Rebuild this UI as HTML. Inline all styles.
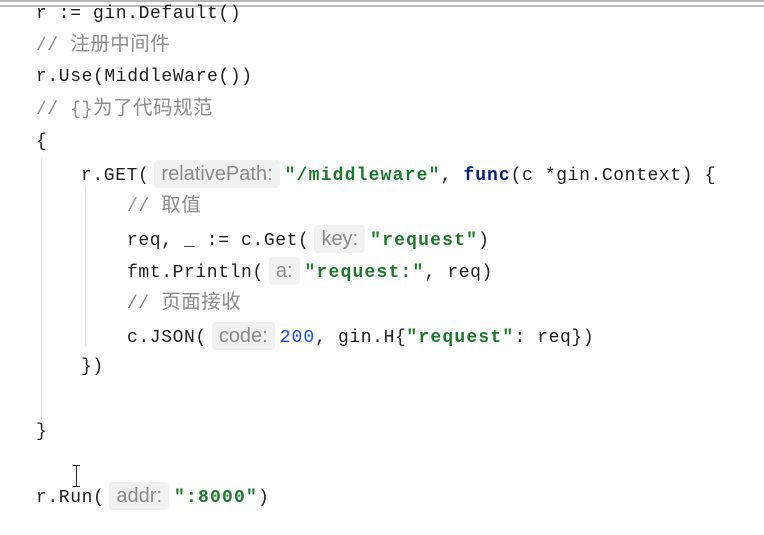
<!DOCTYPE html>
<html><head><meta charset="utf-8"><style>
html,body{margin:0;padding:0;background:#fff;width:764px;height:535px;overflow:hidden;position:relative}
.l{position:absolute;white-space:pre;font-family:"Liberation Mono","Noto Sans CJK SC",monospace;font-size:18px;color:#1e1e1e;line-height:28px;letter-spacing:0.6px}
.c{color:#8c8c8c}
.z{font-family:"Noto Sans CJK SC",sans-serif;font-size:19.5px;letter-spacing:0.5px}
.s{color:#1b7a2a;font-weight:bold;letter-spacing:1.2px}
.k{color:#0a1d80;font-weight:bold;letter-spacing:1px}
.n{color:#1750eb;letter-spacing:1px}
.h{display:inline-block;font-family:"Liberation Sans","Noto Sans CJK SC",sans-serif;font-size:20px;color:#8a8a8a;background:#f1f1f1;border-radius:4px;padding:0 7px;margin:0 5px 0 5px;line-height:28px;letter-spacing:0}
.g{position:absolute;width:1px;background:#e4e4e4}
</style></head><body>
<div style="position:absolute;left:0;top:0;width:764px;height:2px;background:#b5b5b5"></div>
<div style="position:absolute;left:0;top:5px;width:764px;height:2px;background:#bdbdbd"></div>
<div class="g" style="left:41px;top:158px;height:262px"></div>
<div class="g" style="left:85px;top:186px;height:160px"></div>

<div class="l" style="left:36px;top:0px">r := gin.Default()</div>
<div class="l c" style="left:36px;top:28px">// <span class="z">注册中间件</span></div>
<div class="l" style="left:36px;top:63px">r.Use(MiddleWare())</div>
<div class="l c" style="left:36px;top:92px">// {}<span class="z">为了代码规范</span></div>
<div class="l" style="left:36px;top:128px">{</div>
<div class="l" style="left:81px;top:160px">r.GET(<span class="h">relativePath:</span><span class="s">"/middleware"</span>, <span class="k">func</span>(c *gin.Context) {</div>
<div class="l c" style="left:127px;top:189px">// <span class="z">取值</span></div>
<div class="l" style="left:127px;top:225px">req, _ := c.Get(<span class="h">key:</span><span class="s">"request"</span>)</div>
<div class="l" style="left:127px;top:257px">fmt.Println(<span class="h">a:</span><span class="s">"request:"</span>, req)</div>
<div class="l c" style="left:127px;top:286px">// <span class="z">页面接收</span></div>
<div class="l" style="left:127px;top:322px">c.JSON(<span class="h">code:</span><span class="n">200</span>, gin.H{<span class="s">"request"</span>: req})</div>
<div class="l" style="left:81px;top:353px">})</div>
<div class="l" style="left:36px;top:418px">}</div>
<div class="l" style="left:36px;top:482px">r.Run(<span class="h">addr:</span><span class="s">":8000"</span>)</div>
<div style="position:absolute;left:76px;top:465px;width:1px;height:22px;background:#222"></div>
<div style="position:absolute;left:73px;top:465px;width:7px;height:1px;background:#222"></div>
<div style="position:absolute;left:73px;top:486px;width:7px;height:1px;background:#222"></div>
</body></html>
